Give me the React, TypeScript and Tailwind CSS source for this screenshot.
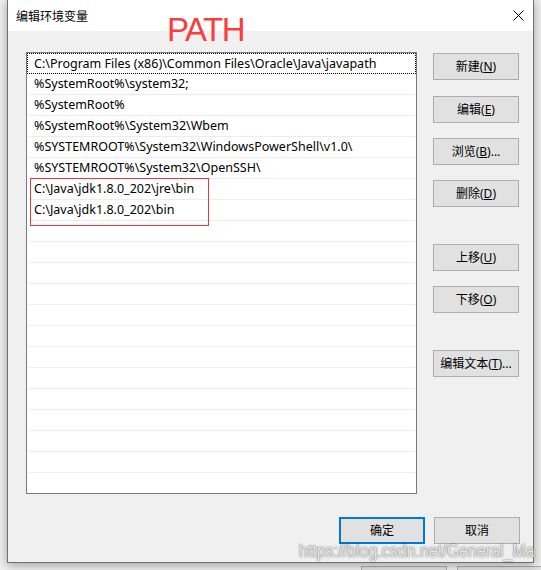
import { ReactNode } from "react"

const paths = [
    "C:\\Program Files (x86)\\Common Files\\Oracle\\Java\\javapath",
    "%SystemRoot%\\system32;",
    "%SystemRoot%",
    "%SystemRoot%\\System32\\Wbem",
    "%SYSTEMROOT%\\System32\\WindowsPowerShell\\v1.0\\",
    "%SYSTEMROOT%\\System32\\OpenSSH\\",
    "C:\\Java\\jdk1.8.0_202\\jre\\bin",
    "C:\\Java\\jdk1.8.0_202\\bin",
]

// 背景窗口左侧露出的一小条
const leftTop = [
    { t: "变量", hl: false },
    { t: "Or", hl: true },
    { t: "Pa", hl: false },
    { t: "TE", hl: false },
    { t: "TM", hl: false },
]
const leftBottom = [
    { t: "变量", hl: false },
    { t: "NA", hl: false },
    { t: "NU", hl: false },
    { t: "OS", hl: false },
    { t: "Pa", hl: true },
    { t: "PA", hl: false },
    { t: "PR", hl: false },
    { t: "PR", hl: false },
]

function Btn({ children, primary = false }: { children: ReactNode; primary?: boolean }) {
    return (
        <div
            className={
                primary
                    ? "w-[86px] h-[27px] flex items-center justify-center bg-[#e1e1e1] border-2 border-[#0078d7] text-[12px] text-black"
                    : "w-[86px] h-[27px] flex items-center justify-center bg-[#e1e1e1] border border-[#adadad] text-[12px] text-black"
            }
        >
            {children}
        </div>
    )
}

function Background() {
    return (
        <div className="flex h-full w-full">
            {/* 左侧 */}
            <div className="w-[7px] flex flex-col overflow-hidden text-[12px] text-black whitespace-nowrap">
                <div className="h-[31px] shrink-0 bg-[#e4e4e4] flex items-center -ml-[6px]">ON</div>
                <div className="h-[9px] shrink-0" />
                {leftTop.map((r, i) => (
                    <div key={i} className={`h-[21px] shrink-0 flex items-center -ml-[6px] ${r.hl ? "bg-[#d9d9d9]" : ""}`}>{r.t}</div>
                ))}
                <div className="h-[97px] shrink-0 border-b border-[#a0a0a0]" />
                <div className="h-[40px] shrink-0 bg-[#e4e4e4]" />
                <div className="h-[21px] shrink-0 flex items-center -ml-[6px]">系统</div>
                <div className="h-[8px] shrink-0 border-b border-[#a0a0a0]" />
                <div className="h-[3px] shrink-0" />
                {leftBottom.map((r, i) => (
                    <div key={i} className={`h-[21px] shrink-0 flex items-center -ml-[6px] ${r.hl ? "bg-[#d9d9d9]" : ""}`}>{r.t}</div>
                ))}
                <div className="h-[62px] shrink-0 border-b border-[#cfcfcf]" />
            </div>

            {/* 中间：底部露出的按钮 */}
            <div className="flex-1 flex flex-col justify-end">
                <div className="flex gap-[10px] pl-[361px]">
                    <div className="w-[86px] h-[4px] bg-[#e1e1e1] border border-b-0 border-[#adadad]" />
                    <div className="w-[86px] h-[4px] bg-[#e1e1e1] border border-b-0 border-[#adadad]" />
                </div>
            </div>

            {/* 右侧 */}
            <div className="w-[8px] flex flex-col">
                <div className="h-[24px] border-b border-[#c4c4c4]" />
                <div className="h-[169px] border-b border-[#a8a8a8] flex justify-start pt-[4px]">
                    <div className="ml-[1px] w-[1px] h-[48px] bg-[#d0d0d0]" />
                </div>
                <div className="h-[17px] border-b border-[#c8c8c8]" />
                <div className="h-[23px] border-b border-[#a8a8a8]" />
                <div className="h-[17px] border-b border-[#c8c8c8]" />
                <div className="h-[18px] border-b border-[#c8c8c8]" />
                <div className="h-[17px] border-b border-[#a8a8a8]" />
                <div className="h-[161px] border-b border-[#a8a8a8] flex justify-end pt-[35px]">
                    <div className="w-[4px] h-[57px] bg-[#c2c2c2]" />
                </div>
                <div className="h-[16px] border-b border-[#c8c8c8]" />
                <div className="h-[18px] border-b border-[#c8c8c8]" />
            </div>
        </div>
    )
}

export default function App() {
    return (
        <div className="relative w-[541px] h-[570px] overflow-hidden bg-[#f0f0f0] font-['Noto_Sans','Noto_Sans_CJK_SC',sans-serif]">
            <Background />

            {/* 编辑环境变量 对话框 */}
            <div className="absolute left-[7px] top-0 w-[527px] h-[563px] flex flex-col bg-[#f0f0f0] border border-t-0 border-[#6f6f6f] shadow-[0_2px_10px_rgba(0,0,0,0.35)]">
                <div className="h-[31px] shrink-0 bg-white flex items-center justify-between pl-[8px] pr-[9px]">
                    <span className="text-[12px] text-black font-['Noto_Sans_CJK_SC',sans-serif]">编辑环境变量</span>
                    <svg width="11" height="11" viewBox="0 0 11 11" className="text-black">
                        <path d="M0.5 0.5 L10.5 10.5 M10.5 0.5 L0.5 10.5" stroke="currentColor" strokeWidth="1" />
                    </svg>
                </div>

                <div className="flex pl-[18px] pt-[21px]">
                    {/* 列表 */}
                    <div className="relative w-[391px] h-[442px] border border-[#7a7a7a] bg-white px-[1px] overflow-hidden">
                        {Array.from({ length: 21 }).map((_, i) => (
                            <div
                                key={i}
                                className={
                                    i === 0
                                        ? "h-[21px] flex items-center pl-[6px] pt-[1px] border border-dotted border-black -mx-[1px] text-[12.5px] text-black whitespace-nowrap"
                                        : "h-[21px] flex items-center pl-[6px] pt-[1px] border-b border-[#ececec] text-[12.5px] text-black whitespace-nowrap"
                                }
                            >
                                {paths[i] ?? ""}
                            </div>
                        ))}
                        {/* 红框标注 */}
                        <div className="absolute left-[3px] top-[125px] w-[179px] h-[48px] border-[1.5px] border-[#e8383d]" />
                    </div>

                    {/* 右侧按钮 */}
                    <div className="ml-[16px] pt-[1px] flex flex-col">
                        <Btn>新建(<u>N</u>)</Btn>
                        <div className="h-[16px]" />
                        <Btn>编辑(<u>E</u>)</Btn>
                        <div className="h-[15px]" />
                        <Btn>浏览(<u>B</u>)...</Btn>
                        <div className="h-[15px]" />
                        <Btn>删除(<u>D</u>)</Btn>
                        <div className="h-[37px]" />
                        <Btn>上移(<u>U</u>)</Btn>
                        <div className="h-[15px]" />
                        <Btn>下移(<u>O</u>)</Btn>
                        <div className="h-[37px]" />
                        <Btn>编辑文本(<u>T</u>)...</Btn>
                    </div>
                </div>

                <div className="flex justify-end gap-[9px] mt-[23px] pr-[13px]">
                    <Btn primary>确定</Btn>
                    <Btn>取消</Btn>
                </div>

                {/* PATH 标注 */}
                <div className="absolute left-[159px] top-[13px] text-[33px] leading-none tracking-[-1.5px] text-[#fb3d3d] font-['Liberation_Sans',sans-serif]">
                    PATH
                </div>
            </div>

            {/* 水印 */}
            <div className="absolute left-[299px] top-[541px] origin-top scale-y-[1.2] text-[16px] leading-none text-white/85 font-['Liberation_Sans',sans-serif] [text-shadow:0_0_1px_rgba(0,0,0,0.6),0_0_2px_rgba(0,0,0,0.3)] whitespace-nowrap">
                https://blog.csdn.net/General_Ma
            </div>
        </div>
    )
}
